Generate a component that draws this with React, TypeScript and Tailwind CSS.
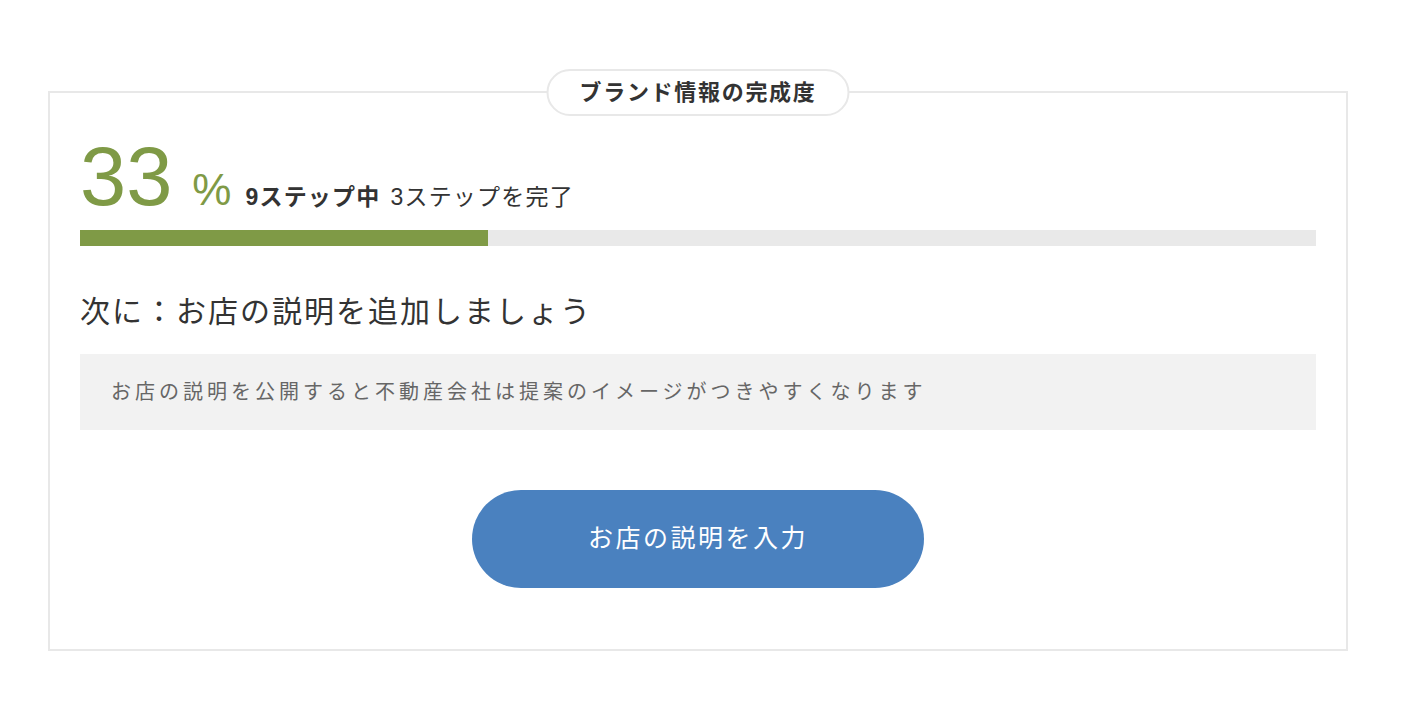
import React from 'react';

const font = { fontFamily: '"Liberation Sans", "Noto Sans CJK JP", sans-serif' };

const BrandProgress: React.FC = () => {
    const done = 3;
    const total = 9;
    const percent = Math.round((done / total) * 100);

    return (
        <div className="relative border-2 border-[#e8e8e8] bg-white px-[30px] pt-[42px] pb-[61px]">
            <div className="absolute -top-[24px] left-1/2 -translate-x-1/2 flex h-[47px] items-center rounded-full border-2 border-[#e8e8e8] bg-white px-[31px]">
                <span className="text-[22px] font-bold tracking-[1.7px] text-[#333]">ブランド情報の完成度</span>
            </div>

            <div className="flex items-baseline">
                <span className="text-[83px] leading-none text-[#7f9a46]">{percent}</span>
                <span className="ml-[20px] text-[44px] leading-none font-light text-[#7f9a46]">%</span>
                <span className="ml-[14px] text-[23px] font-bold tracking-[1.2px] text-[#333]">
                    {total}ステップ中
                </span>
                <span className="ml-[10px] text-[23px] tracking-[1.2px] text-[#333]">{done}ステップを完了</span>
            </div>

            <div className="mt-[12px] h-[16px] w-full bg-[#e9e9e9]">
                <div className="h-full bg-[#7f9a46]" style={{ width: `${percent}%` }} />
            </div>

            <p className="mt-[51px] text-[30px] leading-none tracking-[2px] text-[#333]">
                次に：お店の説明を追加しましょう
            </p>

            <div className="mt-[27px] flex h-[76px] items-center bg-[#f2f2f2] px-[31px]">
                <p className="text-[20px] tracking-[4px] text-[#666]">
                    お店の説明を公開すると不動産会社は提案のイメージがつきやすくなります
                </p>
            </div>

            <div className="mt-[60px] flex justify-center">
                <button className="h-[98px] w-[452px] rounded-full bg-[#4a81bf] text-[25px] tracking-[2.5px] text-white">
                    お店の説明を入力
                </button>
            </div>
        </div>
    );
};

const App: React.FC = () => {
    return (
        <div className="min-h-screen bg-white pt-[91px] pl-[48px] pr-[54px]" style={font}>
            <BrandProgress />
        </div>
    );
};

export default App;
